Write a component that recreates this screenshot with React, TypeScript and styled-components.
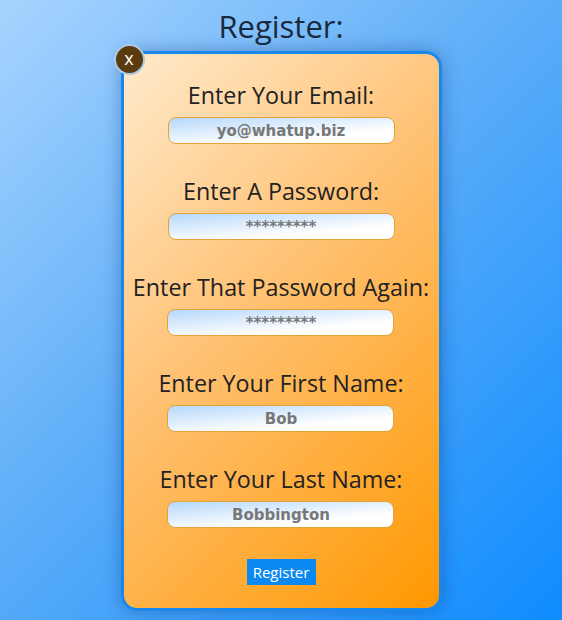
import React from "react";
import styled, { createGlobalStyle } from "styled-components";

const Global = createGlobalStyle`
  html, body { margin: 0; padding: 0; height: 100%; }
  body {
    min-height: 620px;
    background: linear-gradient(135deg, #a8d4ff 0%, #5eaef8 45%, #0f8cff 100%);
    font-family: "Open Sans", "Noto Sans", sans-serif;
    overflow: hidden;
  }
`;

const Page = styled.div`
  display: flex;
  flex-direction: column;
  align-items: center;
`;

const Title = styled.h1`
  margin: 4px 0 0;
  height: 47px;
  line-height: 44px;
  font-size: 31px;
  font-weight: 500;
  color: #1b2a3b;
`;

const Card = styled.form`
  position: relative;
  box-sizing: border-box;
  width: 321px;
  height: 560px;
  border: 3px solid #1888ee;
  border-radius: 16px;
  background: linear-gradient(135deg, #ffeacc 0%, #ffc070 45%, #ff9800 100%);
  box-shadow: 0 0 18px rgba(10, 40, 110, 0.35);
  padding: 26px 0 0;
  display: flex;
  flex-direction: column;
  align-items: center;
  gap: 32px;
`;

const Close = styled.button`
  position: absolute;
  left: -10px;
  top: -10px;
  width: 31px;
  height: 31px;
  border-radius: 50%;
  border: 2px solid #a9cbe6;
  background: #5a3b0d;
  color: #fff;
  font-family: "Open Sans", sans-serif;
  font-size: 18px;
  line-height: 24px;
  padding: 0 0 3px;
  cursor: pointer;
`;

const Group = styled.div`
  display: flex;
  flex-direction: column;
  align-items: center;
  gap: 7px;
`;

const Label = styled.label`
  font-size: 23.3px;
  font-weight: 500;
  line-height: 30px;
  height: 30px;
  color: #222;
  white-space: nowrap;
`;

const Input = styled.input`
  box-sizing: border-box;
  width: 227px;
  height: 27px;
  border: 1px solid #e4a23a;
  border-radius: 8px;
  background: linear-gradient(175deg, #b6d8fb 0%, #ffffff 70%);
  text-align: center;
  font-family: "DejaVu Sans", Verdana, sans-serif;
  font-weight: 700;
  font-size: 15px;
  color: #777;
  outline: none;
`;

const Submit = styled.button`
  margin-top: -1px;
  width: 69px;
  height: 26px;
  border: none;
  background: #0b89f0;
  color: #fff;
  font-family: "Open Sans", sans-serif;
  font-size: 15px;
  padding: 0;
`;

const fields = [
  { label: "Enter Your Email:", value: "yo@whatup.biz" },
  { label: "Enter A Password:", value: "*********" },
  { label: "Enter That Password Again:", value: "*********" },
  { label: "Enter Your First Name:", value: "Bob" },
  { label: "Enter Your Last Name:", value: "Bobbington" },
];

export default function App() {
  return (
    <Page>
      <Global />
      <Title>Register:</Title>
      <Card onSubmit={(e) => e.preventDefault()}>
        <Close type="button">x</Close>
        {fields.map((f) => (
          <Group key={f.label}>
            <Label>{f.label}</Label>
            <Input type="text" defaultValue={f.value} />
          </Group>
        ))}
        <Submit type="submit">Register</Submit>
      </Card>
    </Page>
  );
}
